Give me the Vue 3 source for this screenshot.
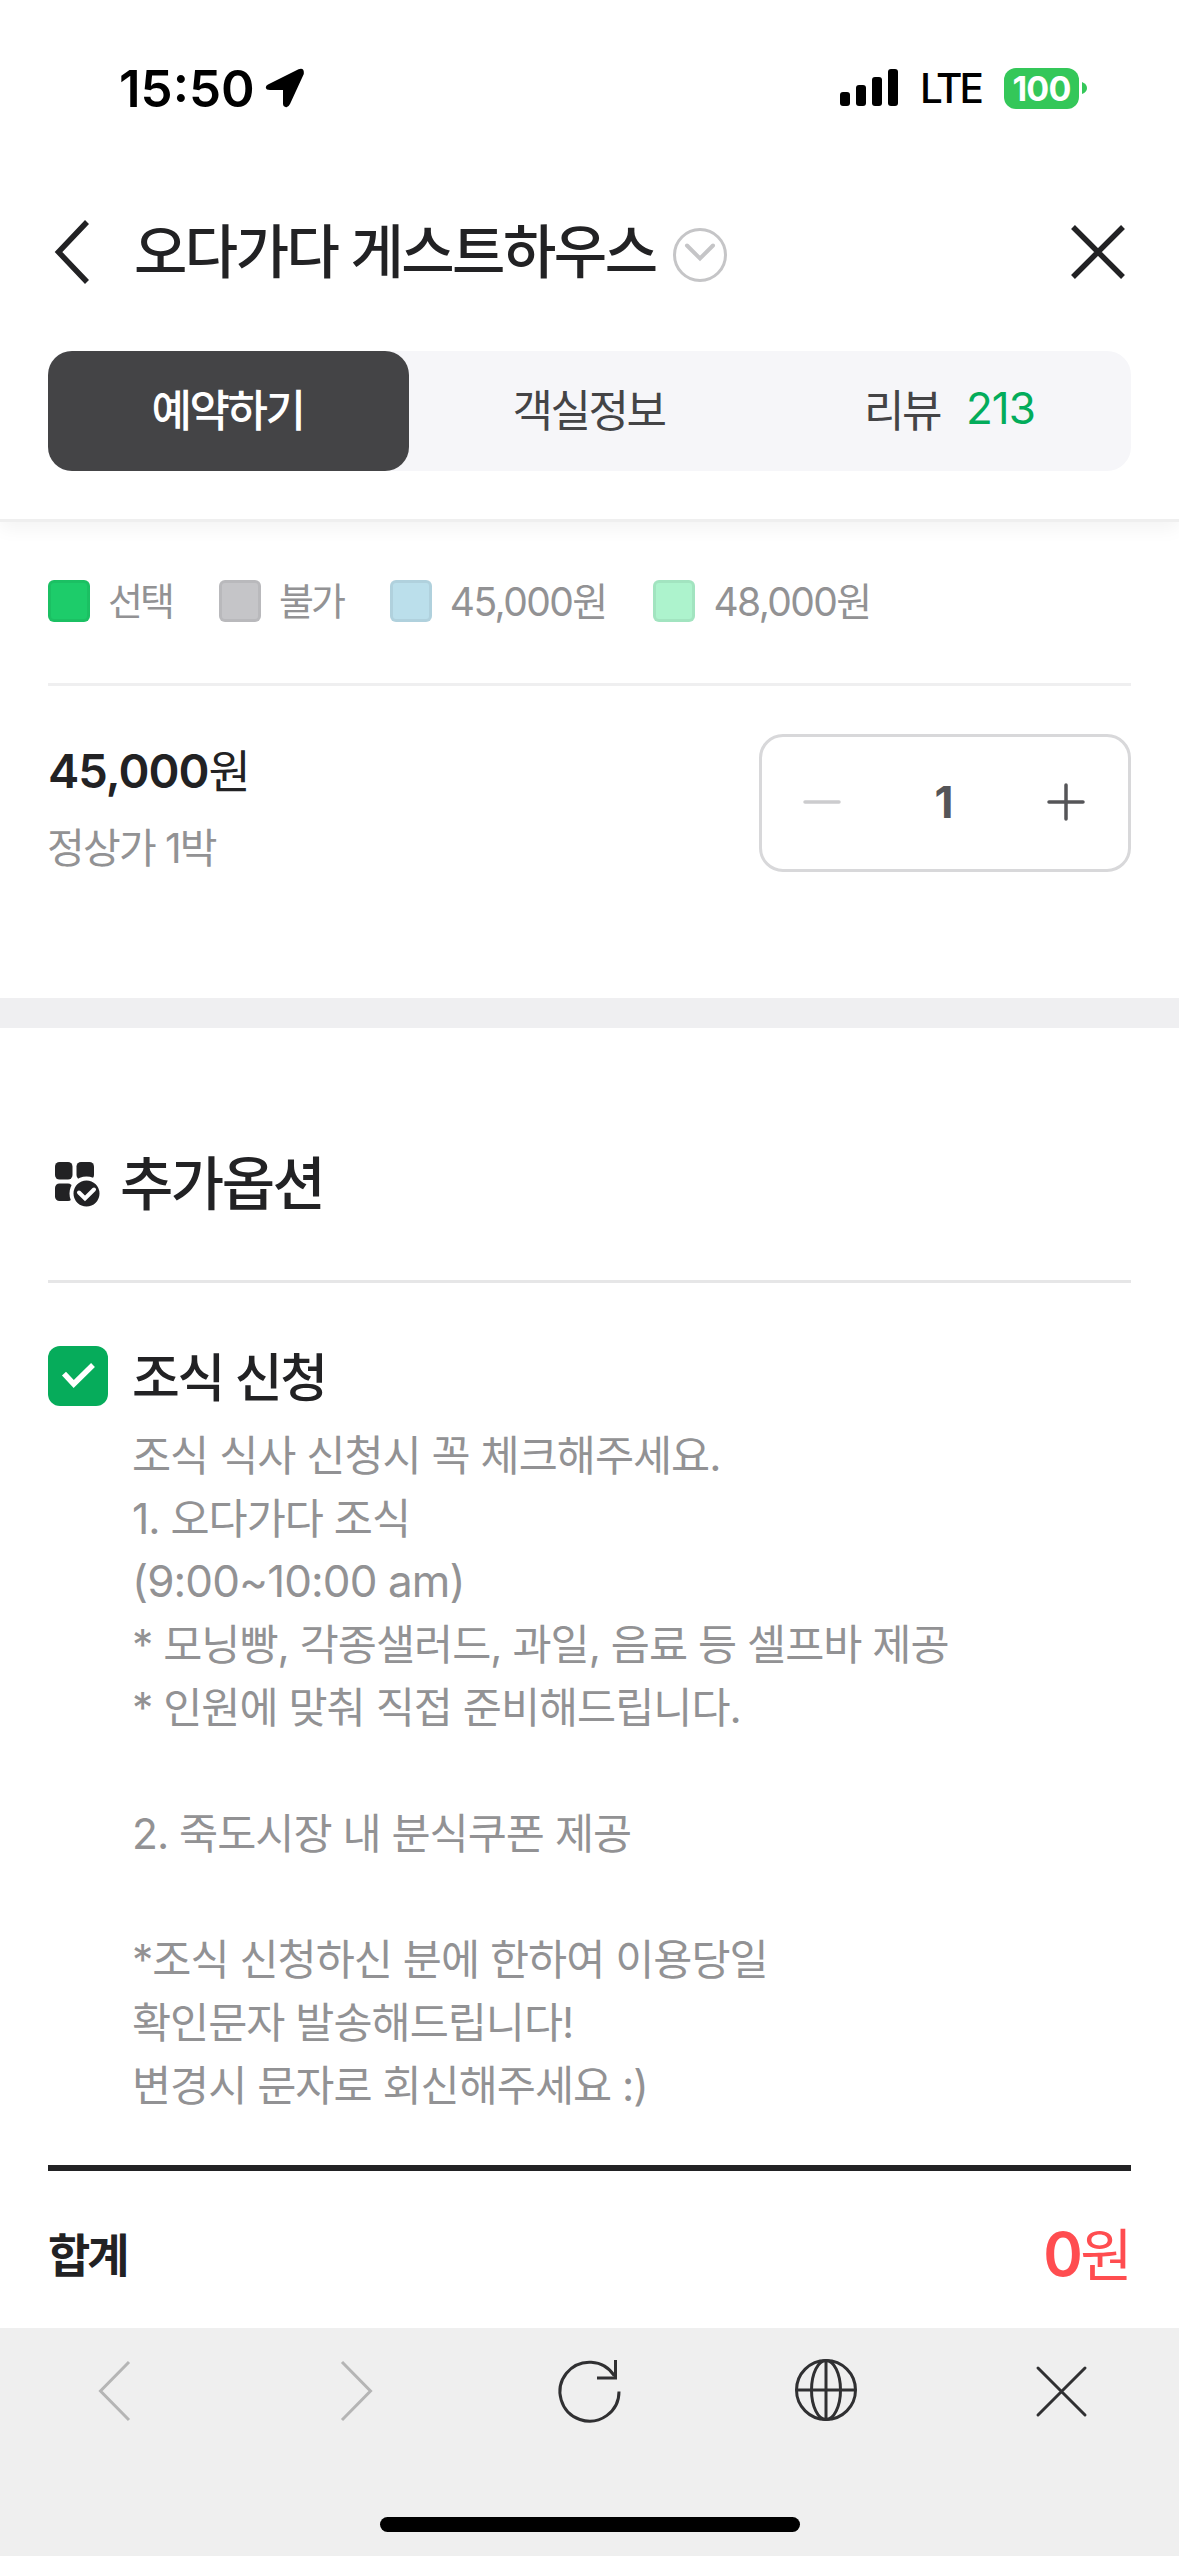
<script setup>
const legend = [
  { key: 'selected', label: '선택' },
  { key: 'blocked', label: '불가' },
  { key: 'low', label: '45,000원', price: true },
  { key: 'high', label: '48,000원', price: true },
]

const notes = [
  { text: '조식 식사 신청시 꼭 체크해주세요.' },
  { text: '1. 오다가다 조식' },
  { text: '(9:00~10:00 am)', latin: true },
  { text: '* 모닝빵, 각종샐러드, 과일, 음료 등 셀프바 제공' },
  { text: '* 인원에 맞춰 직접 준비해드립니다.' },
  { text: '' },
  { text: '2. 죽도시장 내 분식쿠폰 제공' },
  { text: '' },
  { text: '*조식 신청하신 분에 한하여 이용당일' },
  { text: '확인문자 발송해드립니다!' },
  { text: '변경시 문자로 회신해주세요 :)' },
]
</script>

<template>
  <div class="screen">
    <header class="top">
      <div class="status">
        <span class="time">15:50</span>
        <svg class="location" width="40" height="40" viewBox="0 0 40 40">
          <path d="M3 16.5 33.5 1.3Q39.5-.8 38.8 6L25 36Q23 40 20.5 39 18 38.500 18 35.500V22H5Q1 22 .8 19.500 .8 17.600 3 16.500Z" />
        </svg>
        <svg class="signal" width="58" height="38" viewBox="0 0 58 38">
          <rect x="0" y="23" width="10" height="14" rx="3" />
          <rect x="16" y="16" width="10" height="21" rx="3" />
          <rect x="32" y="8" width="10" height="29" rx="3" />
          <rect x="48" y="0" width="10" height="37" rx="3" />
        </svg>
        <span class="network">LTE</span>
        <span class="battery">100</span>
        <svg class="nub" width="5" height="12" viewBox="0 0 5 12"><path d="M0 0Q5 2 5 6T0 12Z" /></svg>
      </div>

      <div class="titlebar">
        <svg class="back" width="40" height="64" viewBox="0 0 40 64">
          <path d="M36 2 7.500 32 36 62" />
        </svg>
        <h1>오다가다 게스트하우스</h1>
        <svg class="more" width="54" height="54" viewBox="0 0 54 54">
          <circle cx="27" cy="27" r="25.500" />
          <path d="M14 17.500 27 30.500 40 17.500" />
        </svg>
        <svg class="close" width="54" height="54" viewBox="0 0 54 54">
          <path d="M2 2 52 52M52 2 2 52" />
        </svg>
      </div>

      <nav class="tabs">
        <a class="tab active">예약하기</a>
        <a class="tab">객실정보</a>
        <a class="tab">리뷰<span class="count">213</span></a>
      </nav>
    </header>

    <section class="price">
      <ul class="legend">
        <li v-for="item in legend" :key="item.key" :class="{ won: item.price }">
          <i class="swatch" :class="item.key"></i><span>{{ item.label }}</span>
        </li>
      </ul>
      <div class="row">
        <div>
          <p class="amount"><b>45,000</b>원</p>
          <p class="basis">정상가 1박</p>
        </div>
        <div class="stepper">
          <svg class="minus" width="38" height="38" viewBox="0 0 38 38"><path d="M2 19H36" /></svg>
          <span>1</span>
          <svg class="plus" width="38" height="38" viewBox="0 0 38 38"><path d="M2 19H36M19 2V36" /></svg>
        </div>
      </div>
    </section>

    <section class="options">
      <h2>
        <svg width="46" height="46" viewBox="0 0 46 46">
          <rect x="0" y="0" width="17.500" height="17.500" rx="4.500" />
          <rect x="21.500" y="0" width="17.500" height="17.500" rx="4.500" />
          <rect x="0" y="21.500" width="17.500" height="17.500" rx="4.500" />
          <circle class="badge" cx="31.500" cy="31.500" r="15" />
          <path class="tick" d="M24 30.500 30 36.500 39 27.500" />
        </svg>
        <span>추가옵션</span>
      </h2>
      <div class="option">
        <span class="checkbox">
          <svg width="60" height="60" viewBox="0 0 60 60"><path d="M16 27.700 25.700 38 45 19" /></svg>
        </span>
        <div class="detail">
          <h3>조식 신청</h3>
          <p v-for="(line, i) in notes" :key="i" :class="{ latin: line.latin }">{{ line.text }}</p>
        </div>
      </div>
      <div class="total">
        <strong>합계</strong>
        <span class="sum"><b>0</b>원</span>
      </div>
    </section>

    <footer class="toolbar">
      <div class="actions">
        <svg class="dim" width="64" height="64" viewBox="0 0 64 64"><path d="M40 3 11.500 32 40 61" /></svg>
        <svg class="dim" width="64" height="64" viewBox="0 0 64 64"><path d="M18 3 46.500 32 18 61" /></svg>
        <svg width="64" height="64" viewBox="0 0 64 64">
          <path d="M60 32.500A29.500 29.500 0 1 1 55.500 17" />
          <path d="M56.500 1V19H38" />
        </svg>
        <svg width="64" height="64" viewBox="0 0 64 64">
          <circle cx="32" cy="31" r="29.500" />
          <ellipse cx="32" cy="31" rx="14.500" ry="29.500" />
          <path d="M32 1.500V60.500M2.500 31H61.500" />
        </svg>
        <svg width="64" height="64" viewBox="0 0 64 64"><path class="round" d="M9 9 56 56M56 9 9 56" /></svg>
      </div>
      <div class="home"></div>
    </footer>
  </div>
</template>

<style>
body {
  margin: 0;
  background: #fff;
}
</style>

<style scoped>
.screen {
  width: 1179px;
  height: 2556px;
  display: flex;
  flex-direction: column;
  overflow: hidden;
  background: #fff;
  color: #222224;
  font-family: Inter, "Noto Sans CJK KR", sans-serif;
}
h1, h2, h3, p, ul {
  margin: 0;
  padding: 0;
  font-weight: 500;
}
svg {
  display: block;
  flex: none;
  overflow: visible;
}
.top {
  border-bottom: 3px solid #efefef;
  box-shadow: 0 6px 18px rgba(0, 0, 0, 0.05);
}
.status {
  height: 176px;
  display: flex;
  align-items: center;
  padding: 0 93px 0 119px;
  color: #000;
  line-height: 1;
}
.time {
  width: 146px;
  font-size: 51px;
  font-weight: 600;
  letter-spacing: 0;
}
.signal {
  margin-left: auto;
}
.network {
  margin: 2px 0 0 22px;
  width: 84px;
  font-size: 40.5px;
  font-weight: 500;
  letter-spacing: -3px;
}
.battery {
  width: 75px;
  height: 41px;
  border-radius: 12px;
  background: #34c759;
  color: #fff;
  font-size: 34px;
  font-weight: 700;
  line-height: 41px;
  text-align: center;
  letter-spacing: -0.8px;
}
.nub {
  margin-left: 3px;
  margin-right: -1px;
  fill: #34c759;
}
.titlebar {
  height: 152px;
  display: flex;
  align-items: center;
  padding: 0 54px 0 51px;
}
.back, .close {
  fill: none;
  stroke: #222224;
  stroke-width: 5.5;
}
h1 {
  margin-left: 43px;
  font-size: 58px;
  line-height: 76px;
  letter-spacing: -2.5px;
  white-space: nowrap;
}
.more {
  margin: 6px 0 0 17px;
  fill: none;
  stroke: #c5c5c7;
  stroke-width: 3;
  stroke-linecap: round;
}
.more path {
  stroke-width: 4;
}
.close {
  margin-left: auto;
}
.tabs {
  display: flex;
  height: 120px;
  margin: 23px 48px 48px;
  border-radius: 24px;
  background: #f6f6f9;
}
.tab {
  flex: 1;
  display: flex;
  align-items: center;
  justify-content: center;
  box-sizing: border-box;
  padding: 0 2px 6px 0;
  border-radius: 24px;
  color: #444446;
  font-size: 44px;
  letter-spacing: -2.5px;
}
.tab.active {
  background: #444446;
  color: #fff;
  font-weight: 500;
}
.count {
  margin-left: 26px;
  color: #03ac5b;
  letter-spacing: -1px;
}
.price {
  height: 476px;
  padding: 0 48px;
  box-sizing: border-box;
  flex: none;
}
.legend {
  height: 158px;
  padding-bottom: 3px;
  display: flex;
  align-items: center;
  gap: 47px;
  list-style: none;
  border-bottom: 3px solid #efeff0;
  box-sizing: content-box;
}
.legend li {
  display: flex;
  align-items: center;
  color: #929294;
  font-size: 38px;
  font-weight: 400;
  letter-spacing: -3px;
  line-height: 1;
}
.legend li.won {
  font-size: 39px;
  letter-spacing: -1.6px;
}
.swatch {
  box-sizing: border-box;
  width: 42px;
  height: 42px;
  margin-right: 18px;
  border: 3px solid rgba(0, 0, 0, 0.06);
  border-radius: 6px;
}
.selected { background: #1dcc6a; }
.blocked { background: #c5c5c8; }
.low { background: #bbdfeb; }
.high { background: #adf3cd; }
.row {
  display: flex;
  justify-content: space-between;
  padding-top: 48px;
}
.amount {
  margin-top: 9px;
  font-size: 46px;
  font-weight: 400;
  line-height: 56px;
  letter-spacing: -1px;
}
.amount b {
  font-size: 47px;
  font-weight: 600;
}
.basis {
  margin: 19px 0 0 -1px;
  color: #929294;
  font-size: 41px;
  font-weight: 400;
  line-height: 60px;
  letter-spacing: -1.7px;
}
.stepper {
  box-sizing: border-box;
  width: 372px;
  height: 138px;
  display: flex;
  align-items: center;
  justify-content: space-between;
  padding: 0 43px 2px 41px;
  border: 3px solid #d8d8da;
  border-radius: 24px;
  color: #555558;
  font-size: 44px;
  font-weight: 700;
}
.stepper svg {
  stroke-width: 3.5;
  stroke-linecap: round;
}
.minus { stroke: #ccccce; }
.plus { stroke: #555558; }
.options {
  flex: none;
  height: 1330px;
  box-sizing: border-box;
  padding: 0 48px;
  border-top: 30px solid #efeff1;
}
h2 {
  height: 252px;
  display: flex;
  align-items: center;
  border-bottom: 3px solid #e6e6e7;
  font-size: 58px;
  letter-spacing: -2.5px;
  padding: 0 7px;
}
h2 svg {
  margin: 61px 19px 0 0;
  fill: #222224;
}
h2 span {
  margin-top: 51px;
}
.badge {
  stroke: #fff;
  stroke-width: 4;
}
.tick {
  fill: none;
  stroke: #fff;
  stroke-width: 4;
  stroke-linecap: round;
}
.option {
  display: flex;
  height: 882px;
}
.checkbox {
  width: 60px;
  height: 60px;
  margin-top: 63px;
  border-radius: 12px;
  background: #06ac5b;
}
.checkbox path {
  fill: none;
  stroke: #fff;
  stroke-width: 5.5;
}
.detail {
  margin-left: 24px;
  padding-top: 63px;
}
h3 {
  height: 78px;
  font-size: 52px;
  line-height: 65px;
  letter-spacing: -2.3px;
}
.detail p {
  height: 63px;
  color: #929294;
  font-size: 42.5px;
  font-weight: 400;
  line-height: 63px;
  letter-spacing: -1px;
  white-space: nowrap;
}
.detail p.latin {
  font-size: 44px;
  letter-spacing: -0.9px;
}
.total {
  display: flex;
  align-items: center;
  justify-content: space-between;
  height: 157px;
  border-top: 6px solid #222224;
}
.total strong {
  margin-top: 5px;
  font-size: 46px;
  font-weight: 700;
  letter-spacing: -3px;
}
.sum {
  margin: 3px 1px 0 0;
  color: #ff4d50;
  font-size: 57px;
  font-weight: 400;
  letter-spacing: -2.6px;
}
.sum b {
  font-size: 60px;
  font-weight: 600;
}
.toolbar {
  flex: 1;
  background: #efefef;
  padding-top: 31px;
}
.actions {
  display: flex;
  justify-content: space-between;
  padding: 0 86px 0 89px;
}
.actions svg {
  fill: none;
  stroke: #303032;
  stroke-width: 3;
}
.actions .dim {
  stroke: #b5b5b5;
}
.round {
  stroke-linecap: round;
}
.home {
  width: 420px;
  height: 15px;
  margin: 94px auto 0;
  border-radius: 8px;
  background: #000;
}
</style>
